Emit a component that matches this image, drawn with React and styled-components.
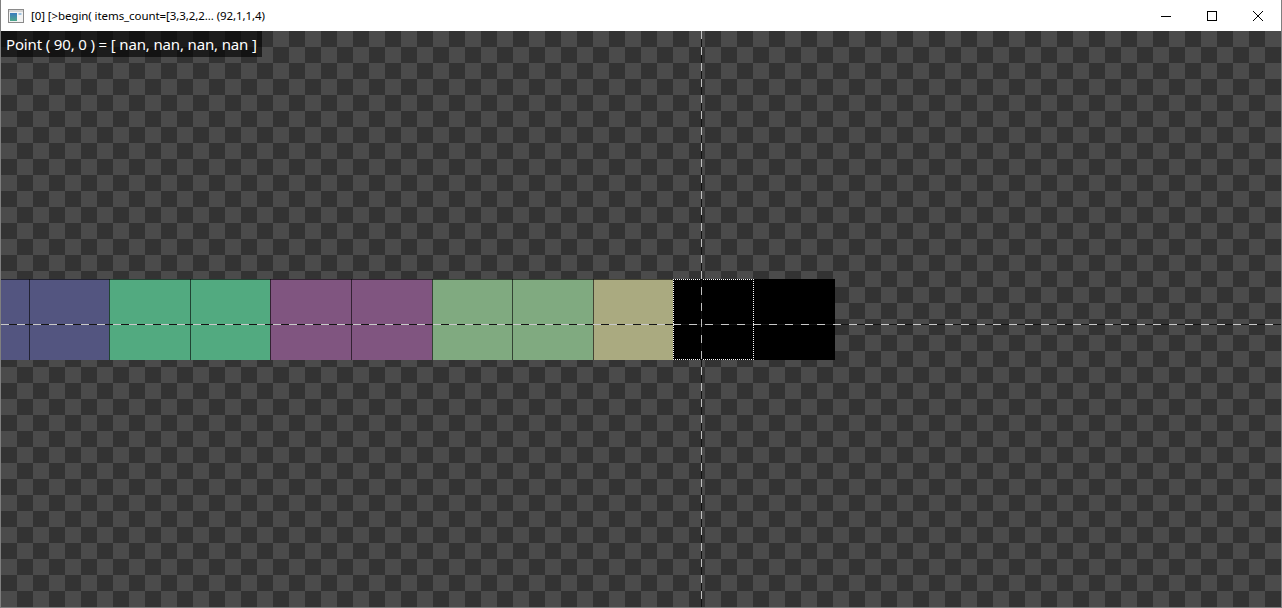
import React from "react";
import styled, { createGlobalStyle } from "styled-components";

const GlobalStyle = createGlobalStyle`
  html, body { margin: 0; padding: 0; background: #ffffff; overflow: hidden; }
  #root { width: 1282px; height: 608px; }
`;

const Window = styled.div`
  box-sizing: border-box;
  width: 1282px;
  height: 608px;
  display: flex;
  flex-direction: column;
  border: 1px solid #7f7f7f;
  border-top: none;
  font-family: "Noto Sans", "Liberation Sans", sans-serif;
`;

const TitleBar = styled.div`
  height: 31px;
  flex: none;
  display: flex;
  align-items: center;
  background: #ffffff;
`;

const AppIcon = styled.svg`
  width: 16px;
  height: 14px;
  margin-left: 7px;
  margin-right: 7px;
  flex: none;
`;

const Title = styled.div`
  flex: 1;
  font-size: 11.5px;
  color: #000;
  white-space: nowrap;
  letter-spacing: -0.08px;
`;

const Controls = styled.div`
  display: flex;
  height: 100%;
`;

const ControlButton = styled.div`
  width: 46px;
  height: 100%;
  display: flex;
  align-items: center;
  justify-content: center;
`;

const Canvas = styled.div`
  position: relative;
  flex: 1;
  overflow: hidden;
  background: repeating-conic-gradient(#4b4b4b 0 25%, #333333 0 50%) 0 0 / 32px 32px;
`;

const Strip = styled.div`
  position: absolute;
  top: 248px;
  left: -52.9px;
  display: flex;
`;

const Cell = styled.div`
  width: 80.6px;
  height: 80.6px;
  flex: none;
  background: ${(p) => p.$color};
  box-shadow: inset 1px 0 0 rgba(0, 0, 0, 0.6), inset 0 1px 0 rgba(0, 0, 0, 0.6);
  outline: ${(p) => (p.$selected ? "1px dotted #ffffff" : "none")};
  outline-offset: -1px;
`;

const HLine = styled.div`
  position: absolute;
  left: 0;
  right: 0;
  top: 293px;
  height: 1px;
  background: repeating-linear-gradient(to right, #c8c8c8 0 8px, #151515 8px 16px);
`;

const VLine = styled.div`
  position: absolute;
  top: 0;
  bottom: 0;
  left: 700px;
  width: 1px;
  background: repeating-linear-gradient(to bottom, #c0c0c0 0 8px, #121212 8px 16px);
`;

const PointLabel = styled.div`
  position: absolute;
  top: 0;
  left: 0;
  height: 26px;
  width: 261px;
  box-sizing: border-box;
  padding-left: 5px;
  background: rgba(0, 0, 0, 0.62);
  color: #ffffff;
  font-size: 15px;
  line-height: 26px;
  white-space: nowrap;
  letter-spacing: -0.15px;
`;

const cells = [
  "#535580",
  "#535580",
  "#52aa80",
  "#52aa80",
  "#805580",
  "#805580",
  "#80aa80",
  "#80aa80",
  "#aaaa80",
  "#000000",
  "#000000",
];

export default function App() {
  return (
    <>
      <GlobalStyle />
      <Window>
        <TitleBar>
          <AppIcon viewBox="0 0 16 14">
            <defs>
              <linearGradient id="ig" x1="0" y1="0" x2="0" y2="1">
                <stop offset="0" stopColor="#3a7bbf" />
                <stop offset="1" stopColor="#4fa88a" />
              </linearGradient>
            </defs>
            <rect x="0.5" y="0.5" width="15" height="13" fill="#f4f4f4" stroke="#8a8a8a" />
            <rect x="1" y="1" width="14" height="2" fill="#d6d6d6" />
            <rect x="2" y="4" width="7" height="8" fill="url(#ig)" />
            <rect x="10.5" y="4" width="3" height="2" fill="#9fc3e0" />
          </AppIcon>
          <Title>[0] [&gt;begin( items_count=[3,3,2,2... (92,1,1,4)</Title>
          <Controls>
            <ControlButton>
              <svg width="10" height="10" viewBox="0 0 10 10">
                <path d="M0 5.5H10" stroke="#000" strokeWidth="1" />
              </svg>
            </ControlButton>
            <ControlButton>
              <svg width="10" height="10" viewBox="0 0 10 10">
                <rect x="0.5" y="0.5" width="9" height="9" fill="none" stroke="#000" strokeWidth="1" />
              </svg>
            </ControlButton>
            <ControlButton>
              <svg width="10" height="10" viewBox="0 0 10 10">
                <path d="M0 0L10 10M10 0L0 10" stroke="#000" strokeWidth="1" />
              </svg>
            </ControlButton>
          </Controls>
        </TitleBar>
        <Canvas>
          <Strip>
            {cells.map((c, i) => (
              <Cell key={i} $color={c} $selected={i === 9} />
            ))}
          </Strip>
          <HLine />
          <VLine />
          <PointLabel>Point ( 90, 0 ) = [ nan, nan, nan, nan ]</PointLabel>
        </Canvas>
      </Window>
    </>
  );
}
